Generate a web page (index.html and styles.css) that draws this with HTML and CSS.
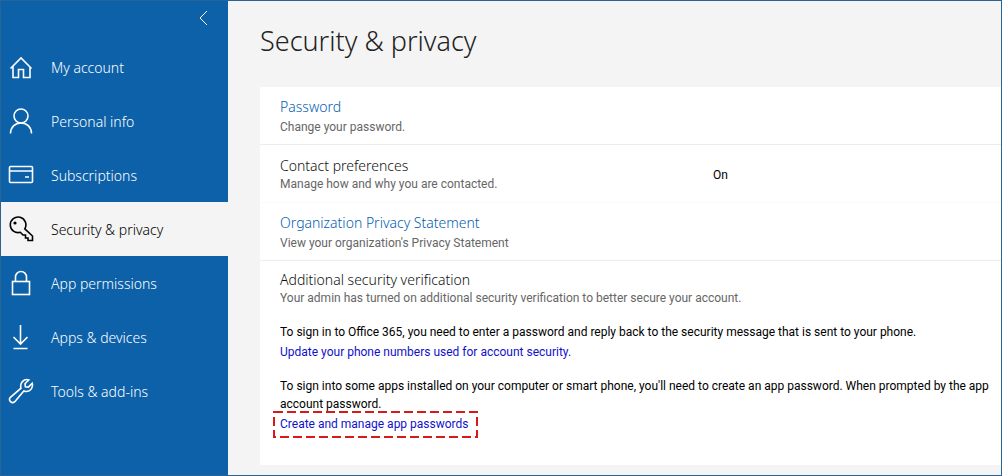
FILE: index.html
```
<!DOCTYPE html>
<html lang="en">
<head>
  <meta charset="UTF-8" />
  <meta name="viewport" content="width=device-width, initial-scale=1" />
  <title>Security &amp; privacy</title>
  <link rel="stylesheet" href="styles.css">
</head>
<body>

<div class="app">
  <aside class="sidebar">
    <button type="button" class="collapse" aria-label="Collapse menu">
      <svg width="10" height="16" viewBox="0 0 10 16"><path d="M9 1L2 8l7 7" /></svg>
    </button>

    <nav>
      <a href="#account" class="nav-item">
        <svg class="icon" viewBox="0 0 26 26"><path d="M2.500 14.500L13 4l10.500 10.500M5 12.500V23.500h5.500v-8h5v8H22v-11" /></svg>
        <span>My account</span>
      </a>
      <a href="#personal" class="nav-item">
        <svg class="icon" viewBox="0 0 26 26"><circle cx="13" cy="8" r="7" /><path d="M2.500 25.500c0-6.500 4.500-10.500 10.500-10.500s10.500 4 10.500 10.500" /></svg>
        <span>Personal info</span>
      </a>
      <a href="#subscriptions" class="nav-item">
        <svg class="icon" viewBox="0 0 26 26"><rect x="1.500" y="4.500" width="23" height="16" rx="1" /><path d="M1.500 9h23M17 15h4" /></svg>
        <span>Subscriptions</span>
      </a>
      <a href="#security" class="nav-item active" aria-current="page">
        <svg class="icon" viewBox="0 0 26 26"><path d="M16.800 12.800L24.500 20V24.500H20v-2.500h-2.500v-3h-2.500l-2.700-2.700a7.800 7.800 0 1 1 4.500-3.500z" /><circle class="dot" cx="7" cy="7" r="1.600" /></svg>
        <span>Security &amp; privacy</span>
      </a>
      <a href="#permissions" class="nav-item">
        <svg class="icon" viewBox="0 0 26 26"><rect x="4.500" y="11.500" width="17" height="13" /><path d="M7.500 11.500V7a5.500 5.500 0 0 1 11 0v4.500" /></svg>
        <span>App permissions</span>
      </a>
      <a href="#devices" class="nav-item">
        <svg class="icon" viewBox="0 0 26 26"><path d="M12.500 1v19M5.500 13l7 7 7-7M5.500 24.500h14" /></svg>
        <span>Apps &amp; devices</span>
      </a>
      <a href="#tools" class="nav-item">
        <svg class="icon" viewBox="0 0 26 26"><path d="M20.800 1.900l-3.800 3.800.4 3 3 .4 3.800-3.800c1.200 4-1.500 8.200-6 8.200-.9 0-1.700-.2-2.400-.5L6.800 23.700c-3 2.600-6.900-1.300-4.400-4.400L13 10.200c-1.500-4.800 2.600-10 7.800-8.300z" /></svg>
        <span>Tools &amp; add-ins</span>
      </a>
    </nav>
  </aside>

  <main class="content">
    <h1>Security &amp; privacy</h1>

    <div class="panel">
      <section class="row">
        <div class="info">
          <h2><a href="#password">Password</a></h2>
          <p>Change your password.</p>
        </div>
      </section>

      <section class="row faint">
        <div class="info">
          <h2>Contact preferences</h2>
          <p>Manage how and why you are contacted.</p>
        </div>
        <div class="value">On</div>
      </section>

      <section class="row">
        <div class="info">
          <h2><a href="#statement">Organization Privacy Statement</a></h2>
          <p>View your organization's Privacy Statement</p>
        </div>
      </section>

      <section class="verification">
        <h2>Additional security verification</h2>
        <p>Your admin has turned on additional security verification to better secure your account.</p>

        <div class="details">
          <p>To sign in to Office 365, you need to enter a password and reply back to the security message that is sent to your phone.</p>
          <a href="#phone">Update your phone numbers used for account security.</a>
        </div>

        <div class="details">
          <p>To sign into some apps installed on your computer or smart phone, you'll need to create an app password. When prompted by the app<br>account password.</p>
          <a href="#app-passwords" class="marked">Create and manage app passwords<svg class="marker"><rect x="1" y="1" width="203" height="25" /></svg></a>
        </div>
      </section>
    </div>
  </main>
</div>

</body>
</html>
```

FILE: styles.css
```
* {
  box-sizing: border-box;
}
body {
  margin: 0;
  font-family: Roboto, "Open Sans", sans-serif;
  font-size: 12px;
  line-height: 18px;
  color: #000;
}
h1, h2, p {
  margin: 0;
}
a {
  text-decoration: none;
}
.app {
  display: flex;
  min-height: 100vh;
  border: 1px solid #2a6496;
  background: #f4f4f4;
  overflow: hidden;
}

/* sidebar */
.sidebar {
  flex: 0 0 227px;
  background: #0c61a9;
}
.collapse {
  display: flex;
  align-items: center;
  justify-content: center;
  width: 30px;
  height: 33px;
  margin: 0 10px 6px auto;
  padding: 0;
  border: none;
  background: none;
  color: #fff;
  cursor: pointer;
}
svg {
  fill: none;
  stroke: currentColor;
}
.nav-item {
  display: flex;
  align-items: center;
  gap: 17px;
  height: 54px;
  padding-left: 7px;
  font-family: "Noto Sans", sans-serif;
  font-size: 14px;
  font-weight: 300;
  color: #fff;
}
.nav-item span {
  padding-top: 2px;
}
.nav-item.active {
  background: #f4f4f4;
  color: #000;
}
.icon {
  flex: none;
  width: 26px;
  height: 26px;
  stroke-width: 1.6;
}
.dot {
  fill: currentColor;
  stroke: none;
}

/* content */
.content {
  flex: 1;
  min-width: 0;
  padding: 20px 0 10px 32px;
}
h1 {
  margin-bottom: 26px;
  font-family: "Noto Sans", sans-serif;
  font-size: 27px;
  font-weight: 300;
  line-height: 40px;
  color: #222;
}
.panel {
  background: #fff;
}
.row {
  display: flex;
  align-items: center;
  min-height: 58px;
  padding: 2px 20px 0;
  border-bottom: 1px solid #ededed;
}
.row.faint {
  border-bottom-color: #fafafa;
}
.info {
  flex: 0 0 433px;
}
h2 {
  font-family: "Noto Sans", sans-serif;
  font-size: 14px;
  font-weight: 300;
  line-height: 18px;
  color: #111;
}
h2 a {
  display: block;
  margin-bottom: 2px;
  color: #0560b0;
}
.info p, .verification > p {
  color: #666;
}
.verification {
  padding: 10px 0 32px 20px;
  white-space: nowrap;
}
.details {
  margin-top: 16px;
}
.details a {
  display: table;
  margin-top: 2px;
  color: #1111cc;
}
.marked {
  position: relative;
}
.marker {
  position: absolute;
  top: -4px;
  left: -7px;
  width: 205px;
  height: 27px;
  stroke: #d61a1a;
  stroke-width: 2;
  stroke-dasharray: 9 4;
}
```
